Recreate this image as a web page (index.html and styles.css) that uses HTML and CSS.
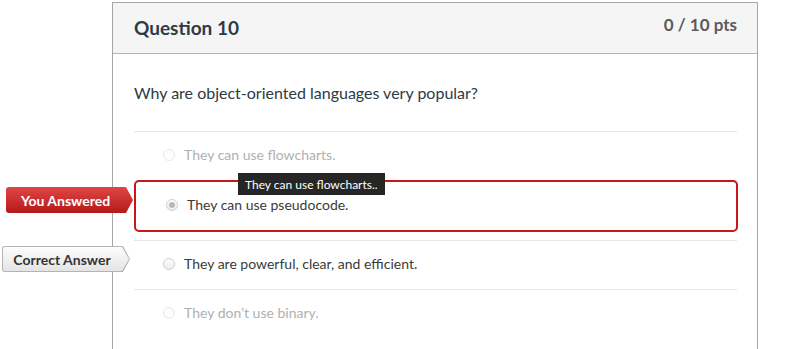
FILE: index.html
```html
<!DOCTYPE html>
<html lang="en">

<head>
  <meta charset="UTF-8">
  <title>Question 10</title>
  <link rel="stylesheet" href="styles.css">
</head>

<body>
  <main class="Quiz">
    <div class="Question">
      <div class="Question-header">
        <h2 class="Question-title">Question 10</h2>
        <span class="Question-points">0 / 10 pts</span>
      </div>
      <div class="Question-body">
        <p class="Question-text">Why are object-oriented languages very popular?</p>
        <ul class="Answers">
          <li class="Answer is-muted">
            <span class="Radio"></span>
            <span>They can use flowcharts.</span>
          </li>
          <li class="Answer is-wrong">
            <span class="Flag Flag--wrong">You Answered</span>
            <span class="Radio is-checked"></span>
            <span>They can use pseudocode.</span>
            <span class="Tooltip">They can use flowcharts..</span>
          </li>
          <li class="Answer">
            <span class="Flag Flag--correct">Correct Answer</span>
            <span class="Radio"></span>
            <span>They are powerful, clear, and efficient.</span>
          </li>
          <li class="Answer is-muted">
            <span class="Radio"></span>
            <span>They don’t use binary.</span>
          </li>
        </ul>
      </div>
    </div>
  </main>
</body>

</html>
```

FILE: styles.css
```css
body {
  background: #fff;
  color: #2d3b45;
  font-family: Lato, "Open Sans", Arial, sans-serif;
  margin: 0;
}

* {
  box-sizing: border-box;
}

.Quiz {
  padding: 2px 0 0 112px;
  width: 758px;
}

.Question {
  border: 1px solid #a6a6a6;
  border-bottom: 0;
}

.Question-header {
  display: flex;
  justify-content: space-between;
  align-items: flex-start;
  height: 51px;
  padding: 0 20px 0 21px;
  background: #f5f5f5;
  border-bottom: 1px solid #b5b5b5;
}

.Question-title {
  margin: 12px 0 0;
  font-size: 19px;
  line-height: 26px;
  font-weight: bold;
  color: #2d3b45;
}

.Question-points {
  margin-top: 11px;
  font-size: 17px;
  line-height: 22px;
  font-weight: bold;
  color: #5b5b5b;
}

.Question-body {
  padding: 27px 20px 30px 21px;
}

.Question-text {
  margin: 0 0 26px;
  font-size: 16px;
  line-height: 24px;
}

.Answers {
  margin: 0;
  padding: 0;
  list-style: none;
}

.Answer {
  position: relative;
  display: flex;
  align-items: center;
  gap: 9px;
  height: 49px;
  padding: 0 0 3px 29px;
  border-top: 1px solid #e6e6e6;
  font-size: 14px;
  color: #3a3a3a;
}

.Answer.is-muted {
  color: #b0b0b0;
}

.Answer.is-wrong {
  height: 52px;
  margin: 0 -1px 8px 0;
  padding-left: 30px;
  border: 2px solid #c81717;
  border-radius: 5px;
}

.Radio {
  width: 12px;
  height: 12px;
  flex-shrink: 0;
  border-radius: 50%;
  border: 1px solid #cfcfcf;
  background: linear-gradient(#fff, #ececec);
  display: flex;
  justify-content: center;
  align-items: center;
}

.is-muted .Radio {
  border-color: #e8e8e8;
  background: #fdfdfd;
}

.Radio.is-checked::after {
  content: "";
  width: 6px;
  height: 6px;
  border-radius: 50%;
  background: #b8b8b8;
}

.Flag {
  position: absolute;
  top: 5px;
  left: -130px;
  width: 127px;
  height: 26px;
  padding-right: 8px;
  display: flex;
  justify-content: center;
  align-items: center;
  font-size: 14px;
  font-weight: bold;
  border-radius: 3px 0 0 3px;
  clip-path: polygon(0 0, calc(100% - 7px) 0, 100% 50%, calc(100% - 7px) 100%, 0 100%);
}

.Flag--wrong {
  color: #fff;
  background: linear-gradient(#e04646, #b41a1a);
}

.Flag--correct {
  top: 5px;
  left: -132px;
  width: 128px;
  color: #333;
  background: #b4b4b4;
  z-index: 0;
}

.Flag--correct::before {
  content: "";
  position: absolute;
  top: 1px;
  left: 1px;
  right: 1px;
  bottom: 1px;
  z-index: -1;
  border-radius: 2px 0 0 2px;
  background: linear-gradient(#fdfdfd, #e4e4e4);
  clip-path: polygon(0 0, calc(100% - 7px) 0, 100% 50%, calc(100% - 7px) 100%, 0 100%);
}

.Tooltip {
  position: absolute;
  top: -9px;
  left: 102px;
  height: 22px;
  padding: 0 7px;
  display: flex;
  align-items: center;
  background: #262626;
  color: #fff;
  font-size: 12px;
  white-space: nowrap;
}
```
